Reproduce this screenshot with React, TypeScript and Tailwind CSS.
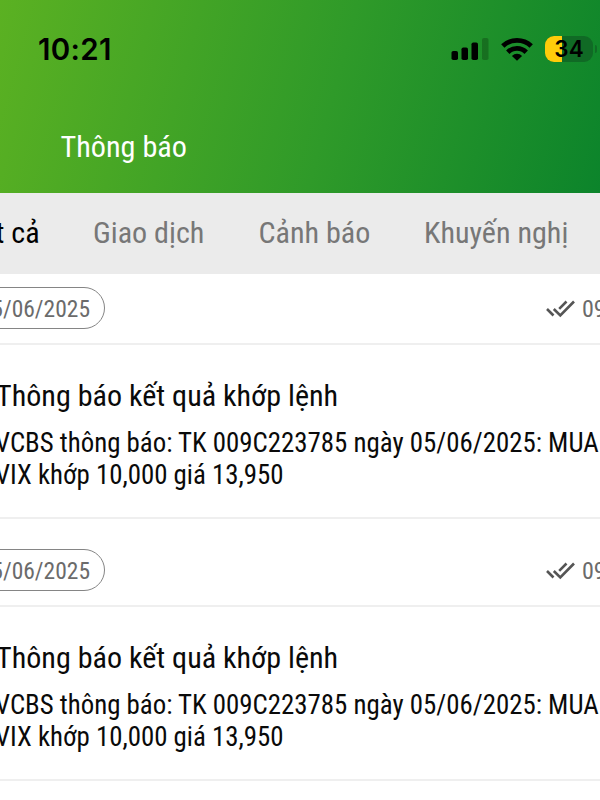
import clsx from "clsx";

const tabs = [
  { name: "Tất cả", left: "-ml-[33px] w-[72px]", active: true },
  { name: "Giao dịch", left: "ml-[54px] w-[112px]", active: false },
  { name: "Cảnh báo", left: "ml-[53.5px] w-[112px]", active: false },
  { name: "Khuyến nghị", left: "ml-[53.5px] w-[146px]", active: false },
];

function StatusBar() {
  return (
    <div className="flex h-[98px] items-center justify-between pl-[38px] text-black">
      <span className="font-[Inter] text-[29.5px] font-semibold tracking-[0.3px]">10:21</span>
      <div className="flex shrink-0 items-center">
        <svg width="38" height="24" viewBox="0 0 38 24">
          <rect x="0.5" y="14" width="6.5" height="9" rx="1.8" />
          <rect x="10.5" y="10.5" width="6.5" height="12.5" rx="1.8" />
          <rect x="20.5" y="5.5" width="6.5" height="17.5" rx="1.8" />
          <rect x="31" y="1" width="6.5" height="22" rx="1.8" opacity="0.22" />
        </svg>
        <svg className="ml-3" width="32" height="24" viewBox="0 0 32 24">
          <g fill="none" stroke="#000" strokeWidth="4.8">
            <path d="M1.8 9A20.5 20.5 0 0 1 30.2 9" />
            <path d="M6.8 15.2A13 13 0 0 1 25.2 15.2" />
          </g>
          <path d="M16 23.8L10.9 18.9A7.4 7.4 0 0 1 21.1 18.9Z" />
        </svg>
        <div className="relative ml-3 flex h-[26px] w-12 items-center justify-center overflow-hidden rounded-[9px] bg-[#106a25]">
          <div className="absolute inset-y-0 left-0 w-[17px] bg-[#ffcc0a]" />
          <span className="relative font-[Inter] text-[22.5px] font-semibold">34</span>
        </div>
        <div className="ml-[2px] mr-[3px] h-2 w-[2px] rounded-r bg-[#106a25]" />
      </div>
    </div>
  );
}

function Notice() {
  return (
    <div className="mb-[30px]">
      <div className="flex h-[42px] items-center justify-between">
        <div className="-ml-8 flex h-[42px] w-[137px] items-center justify-end rounded-full border border-[#858585] pt-[3px] pr-[14px] text-[23.5px] whitespace-nowrap text-[#6b6b6b]">
          05/06/2025
        </div>
        <div className="flex w-[54px] items-center pt-[2px] text-[24px] whitespace-nowrap text-[#6b6b6b]">
          <svg className="shrink-0" width="29" height="18" viewBox="0 0 29 18" fill="none" stroke="#555" strokeWidth="2.6">
            <path d="M1 9L7.5 15.5M7.8 9L14.3 15.5L28 1.5M13.2 8.8L20.5 1.5" />
          </svg>
          <span className="ml-[7px]">09:15</span>
        </div>
      </div>
      <div className="mt-[14px] h-[174px] border-t-2 border-[#efefef] pt-[33px] text-[#0a0a0a]">
        <h2 className="-ml-[4px] text-[30.1px] leading-[36px] whitespace-nowrap">Thông báo kết quả khớp lệnh</h2>
        <p className="-ml-[5px] mt-[13px] text-[26.85px] leading-[32px] whitespace-nowrap">
          VCBS thông báo: TK 009C223785 ngày 05/06/2025: MUA
          <br />
          VIX khớp 10,000 giá 13,950
        </p>
      </div>
      <div className="h-[2px] bg-[#efefef]" />
    </div>
  );
}

export default function App() {
  return (
    <div className="h-[800px] w-[600px] overflow-hidden bg-white font-['Roboto_Condensed','Roboto',sans-serif] [font-stretch:75%]">
      <header className="h-[193px] bg-[linear-gradient(105deg,#5bb122_0%,#2f9a29_55%,#0c842b_100%)]">
        <StatusBar />
        <h1 className="ml-[60.5px] mt-[30px] text-[30.2px] leading-[38px] text-white">Thông báo</h1>
      </header>
      <nav className="flex h-[81px] items-center bg-[#ebebeb] pb-[2px] text-[30.1px]">
        {tabs.map((tab) => (
          <span key={tab.name} className={clsx("shrink-0 whitespace-nowrap", tab.left, tab.active ? "text-black" : "text-[#777]")}>
            {tab.name}
          </span>
        ))}
      </nav>
      <main className="pt-[13px]">
        <Notice />
        <Notice />
      </main>
    </div>
  );
}
